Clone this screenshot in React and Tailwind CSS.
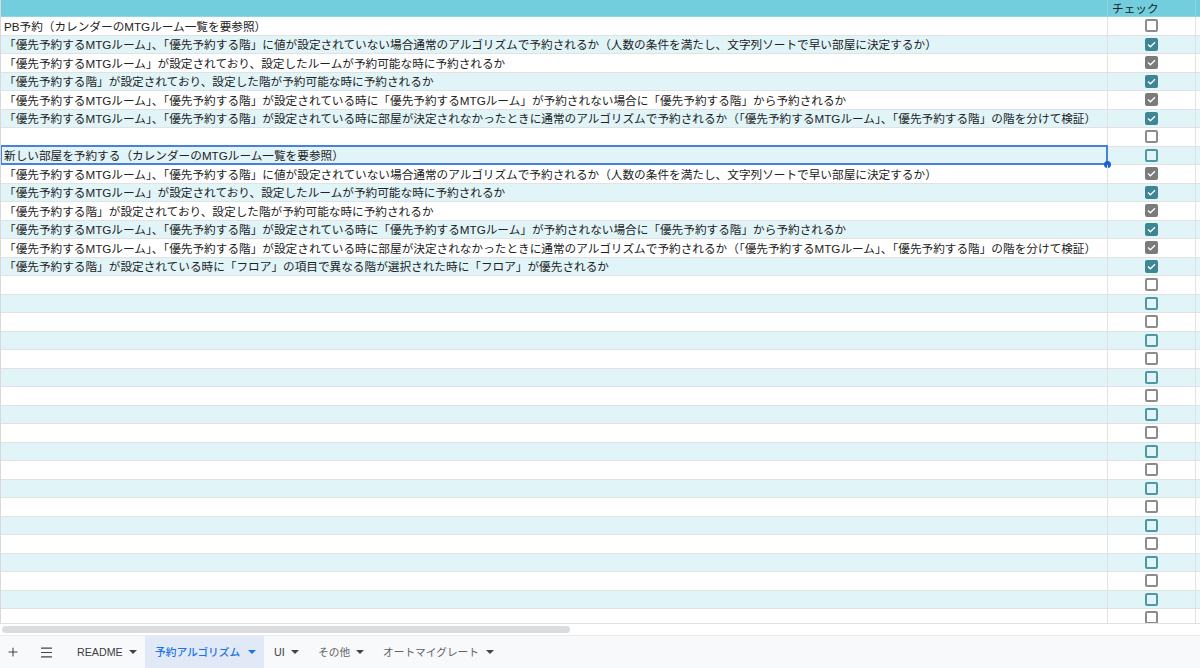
import React from "react";
import { Plus, Menu } from "lucide-react";

const A = "「優先予約するMTGルーム」、「優先予約する階」に値が設定されていない場合通常のアルゴリズムで予約されるか（人数の条件を満たし、文字列ソートで早い部屋に決定するか）";
const B = "「優先予約するMTGルーム」が設定されており、設定したルームが予約可能な時に予約されるか";
const C = "「優先予約する階」が設定されており、設定した階が予約可能な時に予約されるか";
const D = "「優先予約するMTGルーム」、「優先予約する階」が設定されている時に「優先予約するMTGルーム」が予約されない場合に「優先予約する階」から予約されるか";
const E = "「優先予約するMTGルーム」、「優先予約する階」が設定されている時に部屋が決定されなかったときに通常のアルゴリズムで予約されるか（｢優先予約するMTGルーム」、「優先予約する階」の階を分けて検証）";

const rows = [
  { text: "PB予約（カレンダーのMTGルーム一覧を要参照）", checked: false },
  { text: A, checked: true },
  { text: B, checked: true },
  { text: C, checked: true },
  { text: D, checked: true },
  { text: E, checked: true },
  { text: "", checked: false },
  { text: "新しい部屋を予約する（カレンダーのMTGルーム一覧を要参照）", checked: false, selected: true },
  { text: A, checked: true },
  { text: B, checked: true },
  { text: C, checked: true },
  { text: D, checked: true },
  { text: E, checked: true },
  { text: "「優先予約する階」が設定されている時に「フロア」の項目で異なる階が選択された時に「フロア」が優先されるか", checked: true },
  ...Array.from({ length: 19 }, () => ({ text: "", checked: false })),
];

function Checkbox({ checked, teal }) {
  const color = teal ? "bg-[#3e8694]" : "bg-[#7b7b7b]";
  const border = teal ? "border-[#4f97a3]" : "border-[#8c8c8c]";
  if (checked) {
    return (
      <div className={`w-[13px] h-[13px] rounded-[2px] ${color} flex items-center justify-center`}>
        <svg width="9" height="7" viewBox="0 0 9 7">
          <path d="M1 3.5 L3.4 5.8 L8 1.2" fill="none" stroke="white" strokeWidth="1.3" />
        </svg>
      </div>
    );
  }
  return <div className={`w-[13px] h-[13px] rounded-[2px] border-2 ${border}`} />;
}

function Caret({ blue }) {
  return (
    <svg width="8" height="4" viewBox="0 0 8 4" className="ml-auto">
      <path d="M0 0 L8 0 L4 4 Z" fill={blue ? "#1a73e8" : "#444"} />
    </svg>
  );
}

function Tab({ label, width, active, muted }) {
  return (
    <div
      className={`flex items-center pr-[8px] ${width} ${
        active ? "bg-[#e1e9f7] text-[#1a73e8] pl-[10px]" : muted ? "text-[#5f6368] font-normal pl-[11px]" : "pl-[10px]"
      }`}
    >
      <span>{label}</span>
      <Caret blue={active} />
    </div>
  );
}

export default function App() {
  return (
    <div
      className="w-[1200px] h-[668px] flex flex-col bg-white text-[#222] overflow-hidden"
      style={{ fontFamily: '"Liberation Sans", "Noto Sans CJK JP", sans-serif' }}
    >
      {/* grid */}
      <div className="h-[623px] flex flex-col overflow-hidden border-l border-[#d9d9d9]">
        <div className="h-[17px] shrink-0 flex bg-[#72cddd] border-b border-[#8fd6e3]">
          <div className="w-[1107px] border-r border-[#8ad3e0]" />
          <div className="w-[88px] border-r border-[#8ad3e0] text-[11.65px] leading-[17px] pl-[4px]">チェック</div>
        </div>
        {rows.map((r, i) => {
          const teal = i % 2 === 1;
          return (
            <div
              key={i}
              className={`h-[18.5px] shrink-0 flex border-b border-[#e2e2e2] ${teal ? "bg-[#e1f4f8]" : "bg-white"}`}
            >
              <div className="relative w-[1107px] border-r border-[#e2e2e2] text-[11.65px] leading-[15px] pl-[3px] pb-[1px] whitespace-nowrap flex items-end">
                <span>{r.text}</span>
                {r.selected && (
                  <div className="absolute left-[-1px] top-[-2px] right-[-1px] bottom-[-1px] border-2 border-[#4a7fdc]">
                    <div className="absolute right-[-5px] bottom-[-5px] w-[7px] h-[7px] rounded-full bg-[#1f5fd6]" />
                  </div>
                )}
              </div>
              <div className="w-[88px] border-r border-[#e2e2e2] flex items-center justify-center">
                <Checkbox checked={r.checked} teal={teal} />
              </div>
              <div className="flex-1" />
            </div>
          );
        })}
      </div>

      {/* scrollbar strip */}
      <div className="h-[13px] shrink-0 border-t border-[#e2e2e2] border-b border-b-[#e8eaed] flex items-center pl-[2px]">
        <div className="w-[568px] h-[7px] rounded-full bg-[#dadce0]" />
      </div>

      {/* sheet tabs */}
      <div className="flex-1 bg-[#f8f9fa] flex items-stretch text-[10.7px] font-medium text-[#3c4043]">
        <div className="w-[26px] flex items-center justify-center">
          <Plus size={14} strokeWidth={1.8} color="#444" />
        </div>
        <div className="w-[40px] flex items-center justify-center">
          <Menu size={15} strokeWidth={1.8} color="#444" />
        </div>
        <Tab label="README" width="w-[79px] !pl-[11px]" />
        <Tab label="予約アルゴリズム" width="w-[119px]" active />
        <Tab label="UI" width="w-[43px]" />
        <Tab label="その他" width="w-[65px]" muted />
        <Tab label="オートマイグレート" width="w-[130px]" muted />
      </div>
    </div>
  );
}
